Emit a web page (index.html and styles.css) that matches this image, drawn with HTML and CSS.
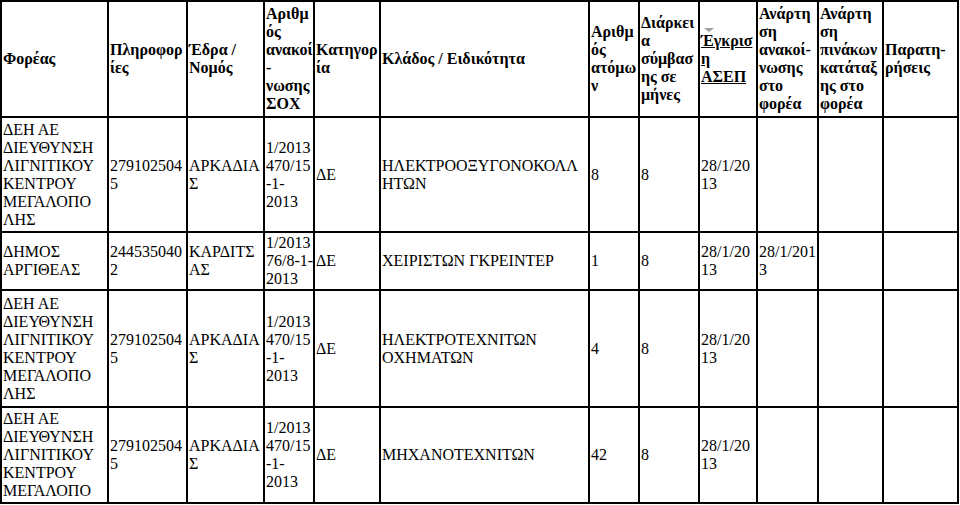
FILE: index.html
```html
<!DOCTYPE html>
<html lang="el">
<head>
<meta charset="utf-8">
<title>Προσλήψεις</title>
<link rel="stylesheet" href="styles.css">
</head>
<body>
<table class="grid">
  <colgroup>
    <col class="c-foreas"><col class="c-info"><col class="c-edra"><col class="c-anak">
    <col class="c-kat"><col class="c-klados"><col class="c-atoma"><col class="c-diark">
    <col class="c-asep"><col class="c-anart1"><col class="c-anart2"><col class="c-parat">
  </colgroup>
  <thead>
    <tr class="row-head">
      <th>Φορέας</th>
      <th>Πληροφορ<br>ίες</th>
      <th>Έδρα /<br>Νομός</th>
      <th>Αριθμ<br>ός<br>ανακοί<br>-<br>νωσης<br>ΣΟΧ</th>
      <th>Κατηγορ<br>ία</th>
      <th>Κλάδος / Ειδικότητα</th>
      <th>Αριθμ<br>ός<br>ατόμω<br>ν</th>
      <th>Διάρκει<br>α<br>σύμβασ<br>ης σε<br>μήνες</th>
      <th><div class="sortable"><span class="sort-mark"></span><a class="head-link">Έγκρισ<br>η<br>ΑΣΕΠ</a></div></th>
      <th>Ανάρτη<br>ση<br>ανακοί-<br>νωσης<br>στο<br>φορέα</th>
      <th>Ανάρτη<br>ση<br>πινάκων<br>κατάταξ<br>ης στο<br>φορέα</th>
      <th>Παρατη-<br>ρήσεις</th>
    </tr>
  </thead>
  <tbody>
    <tr class="row-1">
      <td>ΔΕΗ ΑΕ<br>ΔΙΕΥΘΥΝΣΗ<br>ΛΙΓΝΙΤΙΚΟΥ<br>ΚΕΝΤΡΟΥ<br>ΜΕΓΑΛΟΠΟ<br>ΛΗΣ</td>
      <td>279102504<br>5</td>
      <td>ΑΡΚΑΔΙΑ<br>Σ</td>
      <td>1/2013<br>470/15<br>-1-<br>2013</td>
      <td>ΔΕ</td>
      <td>ΗΛΕΚΤΡΟΟΞΥΓΟΝΟΚΟΛΛ<br>ΗΤΩΝ</td>
      <td>8</td>
      <td>8</td>
      <td>28/1/20<br>13</td>
      <td></td>
      <td></td>
      <td></td>
    </tr>
    <tr class="row-2">
      <td>ΔΗΜΟΣ<br>ΑΡΓΙΘΕΑΣ</td>
      <td>244535040<br>2</td>
      <td>ΚΑΡΔΙΤΣ<br>ΑΣ</td>
      <td>1/2013<br>76/8-1-<br>2013</td>
      <td>ΔΕ</td>
      <td>ΧΕΙΡΙΣΤΩΝ ΓΚΡΕΙΝΤΕΡ</td>
      <td>1</td>
      <td>8</td>
      <td>28/1/20<br>13</td>
      <td>28/1/201<br>3</td>
      <td></td>
      <td></td>
    </tr>
    <tr class="row-3">
      <td>ΔΕΗ ΑΕ<br>ΔΙΕΥΘΥΝΣΗ<br>ΛΙΓΝΙΤΙΚΟΥ<br>ΚΕΝΤΡΟΥ<br>ΜΕΓΑΛΟΠΟ<br>ΛΗΣ</td>
      <td>279102504<br>5</td>
      <td>ΑΡΚΑΔΙΑ<br>Σ</td>
      <td>1/2013<br>470/15<br>-1-<br>2013</td>
      <td>ΔΕ</td>
      <td>ΗΛΕΚΤΡΟΤΕΧΝΙΤΩΝ<br>ΟΧΗΜΑΤΩΝ</td>
      <td>4</td>
      <td>8</td>
      <td>28/1/20<br>13</td>
      <td></td>
      <td></td>
      <td></td>
    </tr>
    <tr class="row-4">
      <td>ΔΕΗ ΑΕ<br>ΔΙΕΥΘΥΝΣΗ<br>ΛΙΓΝΙΤΙΚΟΥ<br>ΚΕΝΤΡΟΥ<br>ΜΕΓΑΛΟΠΟ</td>
      <td>279102504<br>5</td>
      <td>ΑΡΚΑΔΙΑ<br>Σ</td>
      <td>1/2013<br>470/15<br>-1-<br>2013</td>
      <td>ΔΕ</td>
      <td>ΜΗΧΑΝΟΤΕΧΝΙΤΩΝ</td>
      <td>42</td>
      <td>8</td>
      <td>28/1/20<br>13</td>
      <td></td>
      <td></td>
      <td></td>
    </tr>
  </tbody>
</table>
</body>
</html>
```
FILE: styles.css
```css
html, body {
  margin: 0;
  padding: 0;
  background: #fff;
}

body {
  font-family: "Liberation Serif", "Times New Roman", serif;
  font-size: 16px;
  color: #000;
}

.grid {
  border-collapse: collapse;
  table-layout: fixed;
  width: 957px;
}

.grid th,
.grid td {
  border: 2px solid #000;
  padding: 0 1px;
  text-align: left;
  vertical-align: middle;
  white-space: nowrap;
  font-weight: normal;
}

.grid th {
  font-weight: bold;
}

.c-foreas { width: 107px; }
.c-info { width: 79px; }
.c-edra { width: 77px; }
.c-anak { width: 50px; }
.c-kat { width: 66px; }
.c-klados { width: 209px; }
.c-atoma { width: 50px; }
.c-diark { width: 60px; }
.c-asep { width: 58px; }
.c-anart1 { width: 61px; }
.c-anart2 { width: 65px; }
.c-parat { width: 75px; }

.row-head { height: 116px; }
.row-1 { height: 115px; }
.row-2 { height: 58px; }
.row-3 { height: 117px; }
.row-4 { height: 96px; }

.sortable {
  position: relative;
}

.sort-mark {
  position: absolute;
  left: 3px;
  top: -4px;
  width: 0;
  height: 0;
  border-left: 5px solid transparent;
  border-right: 5px solid transparent;
  border-top: 4px solid #a0a0a0;
}

.head-link {
  color: #000;
  text-decoration: underline;
}
```
